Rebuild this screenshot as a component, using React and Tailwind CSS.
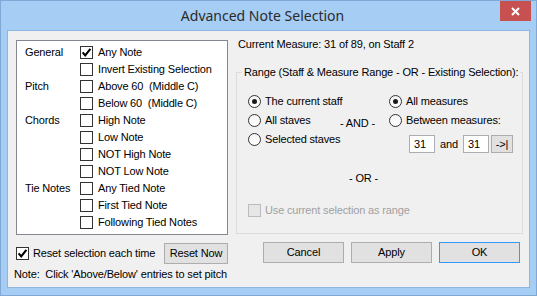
import React from "react";

function CheckBox({ checked, disabled }) {
  return (
    <span
      className={
        "flex h-[13px] w-[13px] shrink-0 items-center justify-center border " +
        (disabled ? "border-[#bcbcbc] bg-[#e6e6e6]" : "border-[#333333] bg-white")
      }
    >
      {checked && (
        <svg width="11" height="11" viewBox="0 0 11 11">
          <path d="M1.6 5.4 L4.2 8.4 L9.4 1.8" fill="none" stroke="#000" strokeWidth="2.1" />
        </svg>
      )}
    </span>
  );
}

function Radio({ checked }) {
  return (
    <span className="flex h-[13px] w-[13px] shrink-0 items-center justify-center rounded-full border border-[#333333] bg-[linear-gradient(#f4f4f4,#ffffff)]">
      {checked && <span className="h-[5px] w-[5px] rounded-full bg-[#1a1a1a]" />}
    </span>
  );
}

function RadioRow({ label, checked }) {
  return (
    <div className="flex h-[19px] items-center gap-[4px] whitespace-nowrap">
      <Radio checked={checked} />
      <span>{label}</span>
    </div>
  );
}

function Btn({ children, className = "" }) {
  return (
    <div
      className={
        "flex h-[21px] items-center justify-center border bg-[#e1e1e1] " + className
      }
    >
      {children}
    </div>
  );
}

const rows = [
  ["General", "Any Note", true],
  ["", "Invert Existing Selection"],
  ["Pitch", "Above 60  (Middle C)"],
  ["", "Below 60  (Middle C)"],
  ["Chords", "High Note"],
  ["", "Low Note"],
  ["", "NOT High Note"],
  ["", "NOT Low Note"],
  ["Tie Notes", "Any Tied Note"],
  ["", "First Tied Note"],
  ["", "Following Tied Notes"],
];

export default function App() {
  return (
    <div className="flex h-[296px] w-[537px] flex-col border border-[#7fa8d6] bg-[#a6cdf4] font-['Liberation_Sans',Arial,sans-serif] text-[11px] leading-[13px] tracking-[-0.15px] text-black">
      {/* title bar */}
      <div className="flex h-[29px] shrink-0 items-start">
        <div className="flex h-[28px] flex-1 items-center justify-center pl-[24px] font-['Noto_Sans',sans-serif] text-[14px] tracking-normal text-[#2b2b2b]">
          Advanced Note Selection
        </div>
        <div className="mr-[5px] flex h-[20px] w-[31px] items-center justify-center bg-[#c75050]">
          <svg width="9" height="9" viewBox="0 0 9 9">
            <path d="M1 1 L8 8 M8 1 L1 8" stroke="#fff" strokeWidth="2" />
          </svg>
        </div>
      </div>

      {/* client */}
      <div className="mx-[6px] flex h-[258px] border border-[#8db5df] bg-[#f0f0f0]">
        {/* left column */}
        <div className="ml-[8px] flex w-[212px] flex-col pt-[9px]">
          <div className="h-[195px] border border-[#828790] bg-white pl-[8px] pt-[3px]">
            {rows.map(([cat, label, checked], i) => (
              <div key={i} className="flex h-[17px] items-center">
                <span className="w-[55px] whitespace-nowrap">{cat}</span>
                <CheckBox checked={checked} />
                <span className="ml-[5px] whitespace-pre">{label}</span>
              </div>
            ))}
          </div>
          <div className="mt-[8px] flex h-[21px] items-center justify-between">
            <div className="flex items-center gap-[4px]">
              <CheckBox checked />
              <span className="whitespace-nowrap">Reset selection each time</span>
            </div>
            <Btn className="w-[64px] border-[#adadad]">Reset Now</Btn>
          </div>
          <div className="ml-[-2px] mt-[4px] whitespace-pre">
            Note:  Click 'Above/Below' entries to set pitch
          </div>
        </div>

        {/* right column */}
        <div className="ml-[8px] flex w-[287px] flex-col pt-[7px]">
          <div className="h-[13px] whitespace-nowrap pl-[2px]">Current Measure: 31 of 89, on Staff 2</div>
          <fieldset className="mt-[15px] min-w-0 border border-[#dcdcdc] px-[5px] pb-[16px]">
            <legend className="whitespace-nowrap px-[2px] leading-[13px]">
              Range (Staff &amp; Measure Range - OR - Existing Selection):
            </legend>
            <div className="flex pl-[6px] pt-[13px]">
              <div className="flex w-[92px] flex-col">
                <RadioRow label="The current staff" checked />
                <RadioRow label="All staves" />
                <RadioRow label="Selected staves" />
              </div>
              <div className="w-[49px] whitespace-nowrap pt-[25px]">- AND -</div>
              <div className="flex flex-col">
                <RadioRow label="All measures" checked />
                <RadioRow label="Between measures:" />
                <div className="ml-[20px] mt-[5px] flex h-[18px] items-center">
                  <div className="flex h-[18px] w-[26px] items-center border border-[#abadb3] bg-white pl-[4px]">31</div>
                  <span className="ml-[5px] w-[23px]">and</span>
                  <div className="flex h-[18px] w-[26px] items-center border border-[#abadb3] bg-white pl-[4px]">31</div>
                  <div className="ml-[2px] flex h-[18px] w-[22px] items-center justify-center border border-[#adadad] bg-[#e1e1e1]">-&gt;|</div>
                </div>
              </div>
            </div>
            <div className="mt-[19px] whitespace-nowrap pl-[107px]">- OR -</div>
            <div className="mt-[19px] flex h-[13px] items-center gap-[4px] pl-[6px]">
              <CheckBox disabled />
              <span className="text-[#a0a0a0]">Use current selection as range</span>
            </div>
          </fieldset>
          <div className="mt-[8px] flex justify-end gap-[7px] pr-[3px]">
            <Btn className="w-[81px] border-[#adadad]">Cancel</Btn>
            <Btn className="w-[81px] border-[#adadad]">Apply</Btn>
            <Btn className="w-[81px] border-[#3399ff]">OK</Btn>
          </div>
        </div>
      </div>
    </div>
  );
}
